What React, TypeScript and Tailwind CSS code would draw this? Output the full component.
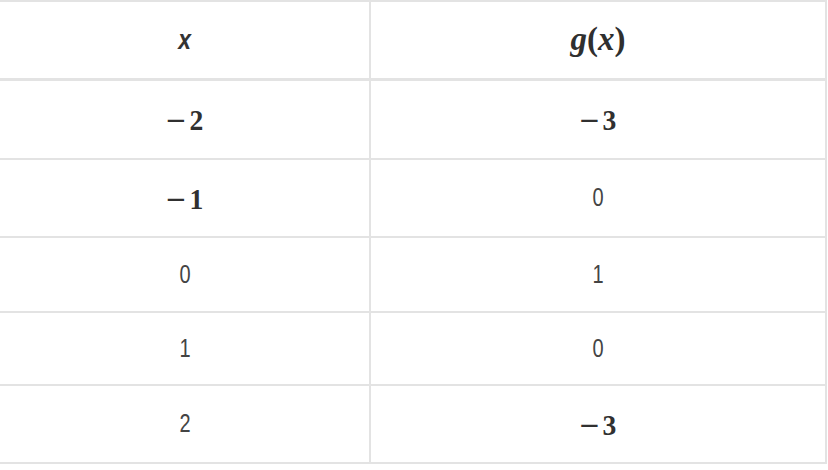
import React from "react";

const serif = "font-['Liberation_Serif',serif]";
const sans = "font-['Liberation_Sans',Arial,sans-serif]";

function Neg({ d }: { d: string }) {
  return (
    <span className={`${serif} inline-flex items-baseline text-[30px] font-bold text-[#303030]`}>
      <span className="font-['DejaVu_Sans',sans-serif] font-normal text-[26px] mr-[2px] relative -top-[1px]">−</span>
      <span className="inline-block scale-x-[0.92]">{d}</span>
    </span>
  );
}
function Plain({ children }: { children: React.ReactNode }) {
  return (
    <span className={`${sans} inline-block scale-x-[0.8] text-[25px] text-[#444]`}>{children}</span>
  );
}

const rows: { h: string; a: React.ReactNode; b: React.ReactNode }[] = [
  { h: "h-[77px]", a: <Neg d="2" />, b: <Neg d="3" /> },
  { h: "h-[76px]", a: <Neg d="1" />, b: <Plain>0</Plain> },
  { h: "h-[73px]", a: <Plain>0</Plain>, b: <Plain>1</Plain> },
  { h: "h-[71px]", a: <Plain>1</Plain>, b: <Plain>0</Plain> },
  { h: "h-[76px]", a: <Plain>2</Plain>, b: <Neg d="3" /> },
];

export default function App() {
  return (
    <div className="w-[828px] h-[470px] bg-white">
      <div className="w-[827px] border-t-2 border-r-2 border-[#e3e3e3]">
        <div className="flex h-[79px] border-b-[3px] border-[#e3e3e3]">
          <div className="w-[371px] border-r-2 border-[#e3e3e3] flex items-center justify-center">
            <span className={`${sans} inline-block scale-x-[0.85] text-[27px] font-bold italic text-[#333]`}>x</span>
          </div>
          <div className="flex-1 flex items-center justify-center">
            <span className={`${serif} inline-block text-[33px] italic font-semibold text-[#2f2f2f]`}>
              g<span className="not-italic">(</span>x<span className="not-italic">)</span>
            </span>
          </div>
        </div>
        {rows.map((r, i) => (
          <div key={i} className={`flex ${r.h} box-content border-b-2 border-[#e3e3e3]`}>
            <div className="w-[371px] border-r-2 border-[#e3e3e3] flex items-center justify-center">{r.a}</div>
            <div className="flex-1 flex items-center justify-center">{r.b}</div>
          </div>
        ))}
      </div>
    </div>
  );
}
